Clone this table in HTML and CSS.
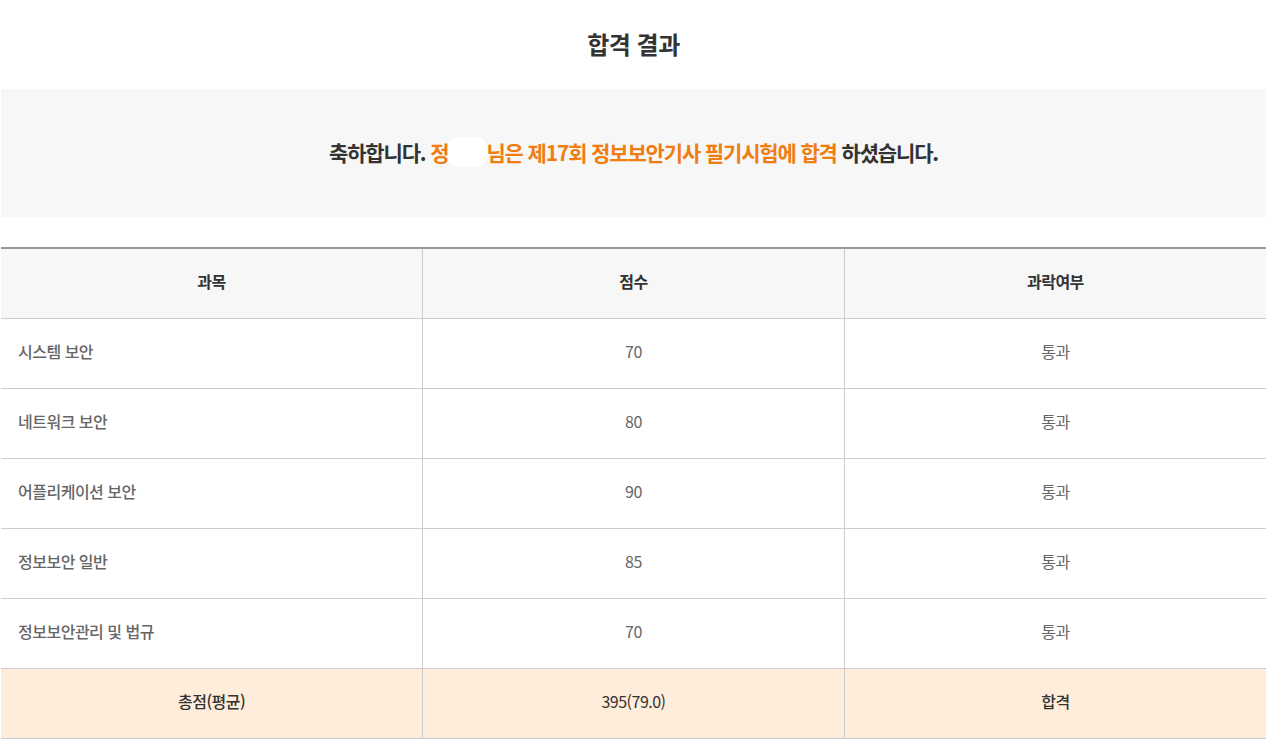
FILE: index.html
```html
<!DOCTYPE html>
<html lang="ko">
<head>
<meta charset="utf-8">
<link rel="stylesheet" href="styles.css">
</head>
<body>
<div class="page">
  <h1 class="title">합격 결과</h1>
  <div class="banner">
    <p class="msg">축하합니다. <span class="hl">정<span class="mask">○○</span>님은 제17회 정보보안기사 필기시험에 합격</span> 하셨습니다.</p>
  </div>
  <table class="result">
    <thead>
      <tr><th>과목</th><th>점수</th><th>과락여부</th></tr>
    </thead>
    <tbody>
      <tr><td class="subj">시스템 보안</td><td>70</td><td>통과</td></tr>
      <tr><td class="subj">네트워크 보안</td><td>80</td><td>통과</td></tr>
      <tr><td class="subj">어플리케이션 보안</td><td>90</td><td>통과</td></tr>
      <tr><td class="subj">정보보안 일반</td><td>85</td><td>통과</td></tr>
      <tr><td class="subj">정보보안관리 및 법규</td><td>70</td><td>통과</td></tr>
    </tbody>
    <tfoot>
      <tr><td>총점(평균)</td><td class="plain">395(79.0)</td><td>합격</td></tr>
    </tfoot>
  </table>
</div>
</body>
</html>
```

FILE: styles.css
```css
html, body {
  margin: 0;
  padding: 0;
  background: #fff;
}
body {
  font-family: "Noto Sans CJK KR", "Noto Sans", sans-serif;
  color: #333;
}
.page {
  width: 1265px;
  margin-left: 1px;
}
.title {
  margin: 0;
  height: 89px;
  line-height: 88px;
  text-align: center;
  font-size: 24px;
  font-weight: 700;
  color: #333;
  letter-spacing: -0.5px;
}
.banner {
  background: #f7f7f7;
  height: 128px;
  display: flex;
  align-items: center;
  justify-content: center;
  margin-bottom: 30px;
}
.msg {
  margin: 0;
  font-size: 21px;
  font-weight: 700;
  letter-spacing: -1.15px;
  color: #333;
  padding-bottom: 2px;
}
.hl { color: #f07d0f; }
.mask {
  color: #fff;
  background: #fff;
  border-radius: 8px;
  letter-spacing: -2px;
}
.result {
  width: 100%;
  border-collapse: collapse;
  table-layout: fixed;
  border-top: 2px solid #999;
  border-bottom: 1px solid #ccc;
}
.result th, .result td {
  height: 64px;
  padding: 0 0 5px;
  text-align: center;
  border-bottom: 1px solid #ccc;
  border-left: 1px solid #ccc;
  font-size: 16px;
  letter-spacing: -0.5px;
}
.result th:first-child, .result td:first-child {
  border-left: none;
}
.result th {
  background: #f7f7f7;
  font-weight: 700;
  color: #333;
}
.result tbody td {
  color: #666;
  font-weight: 400;
}
.result td.subj {
  text-align: left;
  padding-left: 17px;
  font-weight: 500;
}
.result tfoot td {
  background: #ffeddc;
  color: #333;
  font-weight: 500;
}
.result tfoot td.plain {
  font-weight: 400;
}
```
